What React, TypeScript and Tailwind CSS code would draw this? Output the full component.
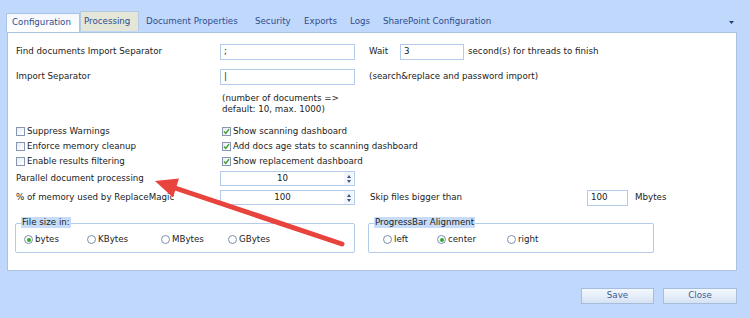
import React from "react";

const font = { fontFamily: '"DejaVu Sans", Verdana, sans-serif' };

function Input({ w, value, center }: { w: string; value?: string; center?: boolean }) {
  return (
    <div
      className={`${w} h-[16px] border border-[#b3cbe9] bg-white flex items-center ${center ? "justify-center" : "pl-[3px]"} text-[#222]`}
    >
      {value}
    </div>
  );
}

function Spin({ value }: { value: string }) {
  return (
    <div className="w-[135px] h-[15px] border border-[#b3cbe9] bg-white flex items-center text-[#222]">
      <div className="flex-1 text-center">{value}</div>
      <div className="w-[9px] h-full flex flex-col items-center justify-center gap-[2px] bg-[#f2f6fc] mr-[1px]">
        <svg width="4" height="3" viewBox="0 0 4 3"><path d="M0 3 L2 0 L4 3 Z" fill="#3a5487" /></svg>
        <svg width="4" height="3" viewBox="0 0 4 3"><path d="M0 0 L4 0 L2 3 Z" fill="#3a5487" /></svg>
      </div>
    </div>
  );
}

function Check({ checked, label }: { checked?: boolean; label: string }) {
  return (
    <div className="flex items-center gap-[2px]">
      <div className="w-[9px] h-[9px] border border-[#8796b1] bg-gradient-to-br from-[#e9edf3] to-white flex items-center justify-center">
        {checked && (
          <svg width="7" height="7" viewBox="0 0 7 7">
            <path d="M1 3.5 L2.8 5.4 L6 1.2" stroke="#3f9b2f" strokeWidth="1.4" fill="none" />
          </svg>
        )}
      </div>
      <span className="text-[#222]">{label}</span>
    </div>
  );
}

function Radio({ checked, label, w }: { checked?: boolean; label: string; w?: string }) {
  return (
    <div className={`flex items-center gap-[2px] ${w ?? ""}`}>
      <div className="w-[9px] h-[9px] rounded-full border border-[#7d8fae] bg-white flex items-center justify-center">
        {checked && <div className="w-[4px] h-[4px] rounded-full bg-[#2faa2f]" />}
      </div>
      <span className="text-[#222]">{label}</span>
    </div>
  );
}

function Button({ label, w }: { label: string; w: string }) {
  return (
    <div
      className={`${w} h-[16px] border border-[#a6bcdb] bg-gradient-to-b from-[#f3f7fd] via-[#e6eef9] to-[#d5e2f3] flex items-center justify-center text-[#3d5a8f]`}
    >
      {label}
    </div>
  );
}

export default function App() {
  return (
    <div className="relative w-[750px] h-[318px] bg-[#c0d8fb] text-[8.7px] overflow-hidden" style={font}>
      {/* tabs */}
      <div className="flex items-end h-[32px] pl-[6px] text-[#2d4d8f]">
        <div className="w-[74px] h-[19px] border border-b-0 border-[#aac4e8] bg-gradient-to-b from-[#f4f8fd] to-white flex items-center pl-[5px]">
          Configuration
        </div>
        <div className="w-[59px] h-[20px] border border-b-0 border-[#b6c9e4] bg-[#e4e7d8] flex items-center pl-[3px] mb-px">
          Processing
        </div>
        <div className="flex items-center h-[20px] ml-[7px]">
          <span className="w-[109px]">Document Properties</span>
          <span className="w-[49px]">Security</span>
          <span className="w-[46px]">Exports</span>
          <span className="w-[33px]">Logs</span>
          <span>SharePoint Configuration</span>
        </div>
        <div className="ml-auto mr-[16px] h-[20px] flex items-center">
          <svg width="5" height="3" viewBox="0 0 5 3"><path d="M0 0 L5 0 L2.5 3 Z" fill="#24407a" /></svg>
        </div>
      </div>

      {/* panel */}
      <div className="ml-[7px] w-[730px] h-[239px] bg-white border border-[#a9c3e6] pl-[8px] pt-[11px] flex flex-col">
        <div className="flex items-center h-[16px]">
          <span className="w-[204px] text-[#222]">Find documents Import Separator</span>
          <Input w="w-[135px]" value=";" />
          <span className="ml-[14px] w-[31px] text-[#222]">Wait</span>
          <Input w="w-[64px]" value="3" />
          <span className="ml-[4px] text-[#222]">second(s) for threads to finish</span>
        </div>
        <div className="flex items-center h-[16px] mt-[9px]">
          <span className="w-[204px] text-[#222]">Import Separator</span>
          <Input w="w-[135px]" value="|" />
          <span className="ml-[14px] text-[#222]">(search&amp;replace and password import)</span>
        </div>
        <div className="ml-[206px] mt-[8px] leading-[11px] text-[#222]">
          <div>(number of documents =&gt;</div>
          <div>default: 10, max. 1000)</div>
        </div>

        <div className="flex flex-col mt-[9px]">
          {[
            ["Suppress Warnings", "Show scanning dashboard"],
            ["Enforce memory cleanup", "Add docs age stats to scanning dashboard"],
            ["Enable results filtering", "Show replacement dashboard"],
          ].map(([a, b]) => (
            <div key={a} className="flex items-center h-[15px]">
              <div className="w-[206px]">
                <Check label={a} />
              </div>
              <Check checked label={b} />
            </div>
          ))}
        </div>

        <div className="flex items-center h-[15px] mt-[2px]">
          <span className="w-[204px] text-[#222]">Parallel document processing</span>
          <Spin value="10" />
        </div>
        <div className="flex items-center h-[15px] mt-[4px]">
          <span className="w-[204px] text-[#222]">% of memory used by ReplaceMagic</span>
          <Spin value="100" />
          <span className="ml-[15px] w-[217px] text-[#222]">Skip files bigger than</span>
          <Input w="w-[41px]" value="100" />
          <span className="ml-[7px] text-[#222]">Mbytes</span>
        </div>

        <div className="flex mt-[18px] -ml-px">
          <div className="relative w-[340px] h-[30px] border border-[#b3cbe9] rounded-[2px] flex items-center pl-[8px] pt-[4px]">
            <span className="absolute left-[5px] top-[-7px] bg-[#c6dcf7] px-[1px] leading-[11px] text-[#222]">File size in:</span>
            <Radio checked label="bytes" w="w-[63px]" />
            <Radio label="KBytes" w="w-[74px]" />
            <Radio label="MBytes" w="w-[67px]" />
            <Radio label="GBytes" />
          </div>
          <div className="relative ml-[13px] w-[286px] h-[30px] border border-[#b3cbe9] rounded-[2px] flex items-center pl-[14px] pt-[4px]">
            <span className="absolute left-[5px] top-[-7px] bg-[#c6dcf7] px-[1px] leading-[11px] text-[#222]">ProgressBar Alignment</span>
            <Radio label="left" w="w-[54px]" />
            <Radio checked label="center" w="w-[70px]" />
            <Radio label="right" />
          </div>
        </div>
      </div>

      {/* buttons */}
      <div className="ml-[7px] w-[730px] mt-[17px] flex justify-end gap-[9px]">
        <Button label="Save" w="w-[73px]" />
        <Button label="Close" w="w-[74px]" />
      </div>

      {/* red arrow annotation */}
      <svg className="absolute left-0 top-0 pointer-events-none" width="750" height="318" viewBox="0 0 750 318">
        <line x1="342" y1="244" x2="172" y2="187" stroke="#e8433c" strokeWidth="5" strokeLinecap="round" />
        <polygon points="155,181 179,178.5 173,197.5" fill="#e8433c" />
      </svg>
    </div>
  );
}
